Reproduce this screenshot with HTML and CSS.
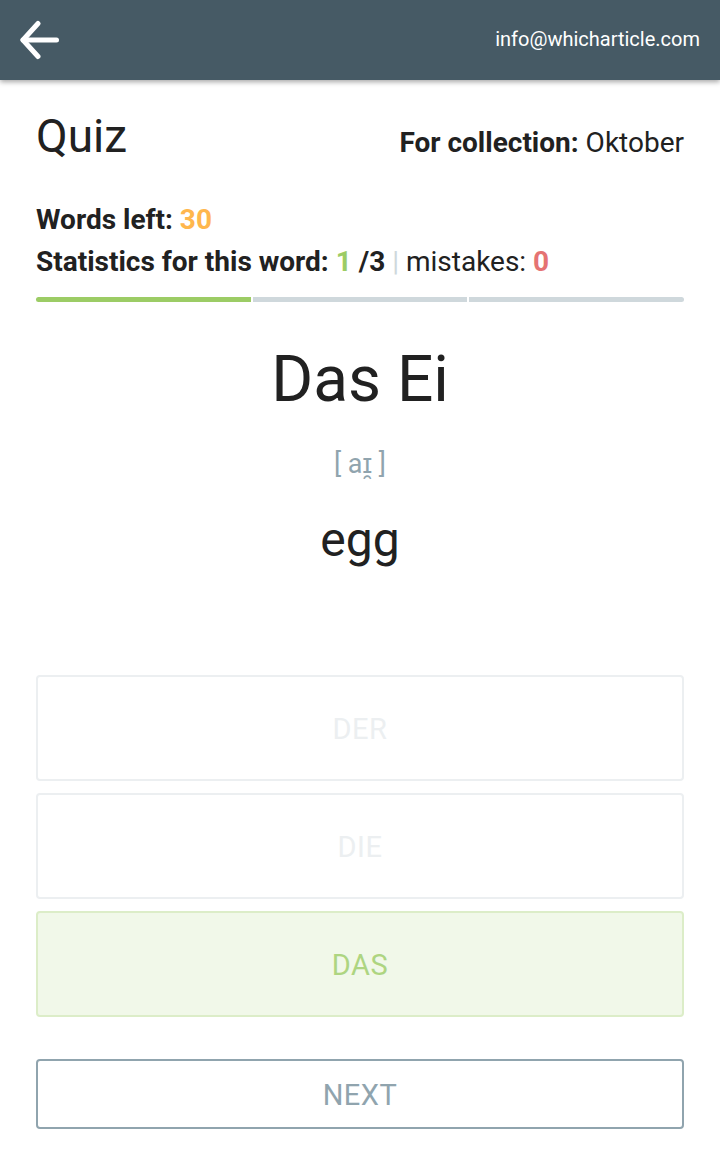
FILE: index.html
```html
<!DOCTYPE html>
<html lang="en">
<head>
<meta charset="utf-8">
<title>Quiz</title>
<link rel="stylesheet" href="styles.css">
</head>
<body>
<header class="topbar">
  <a class="back" href="#" aria-label="Back">
    <svg width="40" height="40" viewBox="0 0 40 40" fill="none" stroke="#ffffff" stroke-width="5" stroke-linecap="round" stroke-linejoin="round">
      <path d="M4 20 H37.5"/>
      <path d="M19 3.5 L4 20 L19 36.5"/>
    </svg>
  </a>
  <span class="email">info@whicharticle.com</span>
</header>
<main class="content">
  <div class="title-row">
    <h1 class="title">Quiz</h1>
    <div class="collection"><b>For collection:</b> Oktober</div>
  </div>
  <div class="stats">
    <div class="stat-line"><b>Words left:</b> <b class="orange">30</b></div>
    <div class="stat-line"><b>Statistics for this word:</b> <b class="green">1</b> <b>/3</b> <span class="sep">|</span> mistakes: <b class="red">0</b></div>
  </div>
  <div class="progress">
    <div class="seg done"></div>
    <div class="seg"></div>
    <div class="seg"></div>
  </div>
  <div class="word">
    <div class="noun">Das Ei</div>
    <div class="phon">[ aɪ̯ ]</div>
    <div class="trans">egg</div>
  </div>
  <div class="answers">
    <div class="answer">DER</div>
    <div class="answer">DIE</div>
    <div class="answer correct">DAS</div>
  </div>
  <div class="next">NEXT</div>
</main>
</body>
</html>
```
FILE: styles.css
```css
* { box-sizing: border-box; }
html, body { margin: 0; padding: 0; background: #ffffff; }
body {
  font-family: Roboto, "Liberation Sans", Arial, sans-serif;
  color: #212121;
}
.topbar {
  height: 80px;
  background: #465a65;
  display: flex;
  align-items: center;
  justify-content: space-between;
  padding: 0 20px 0 19px;
  box-shadow: 0 2px 5px rgba(0, 0, 0, 0.35);
}
.back { display: flex; width: 40px; height: 40px; }
.back svg { display: block; }
.email {
  color: #ffffff;
  font-size: 20px;
  line-height: 1;
  padding-bottom: 2px;
}
.content { padding: 0 36px; }
.title-row {
  display: flex;
  justify-content: space-between;
  align-items: baseline;
  margin-top: 33px;
}
.title {
  margin: 0;
  font-size: 46px;
  font-weight: 400;
  line-height: 1;
}
.collection { font-size: 28px; line-height: 1; }
.collection b { font-weight: 700; }
.stats { margin-top: 40px; font-size: 28px; line-height: 42px; }
.orange { color: #ffb74d; }
.green { color: #9ccc65; }
.red { color: #e57373; }
.sep { color: #cfd8dc; }
.progress {
  margin-top: 14px;
  display: flex;
  gap: 2px;
  height: 5px;
}
.seg { flex: 1; background: #cfd8dc; }
.seg:first-child { border-radius: 3px 0 0 3px; }
.seg:last-child { border-radius: 0 3px 3px 0; }
.seg.done { background: #9ccc65; }
.word { text-align: center; }
.noun { margin-top: 46px; font-size: 64px; line-height: 1; }
.phon { margin-top: 39px; font-size: 27px; line-height: 1; color: #90a4ae; }
.trans { margin-top: 38px; font-size: 48px; line-height: 1; }
.answers {
  margin-top: 111px;
  display: flex;
  flex-direction: column;
  gap: 12px;
}
.answer {
  height: 106px;
  border: 2px solid #eceff1;
  border-radius: 4px;
  display: flex;
  align-items: center;
  justify-content: center;
  padding-top: 3px;
  font-size: 29px;
  letter-spacing: 0.5px;
  line-height: 1;
  color: #eceff1;
}
.answer.correct {
  background: #f1f8e9;
  border-color: #dcedc8;
  color: #aed581;
}
.next {
  margin-top: 42px;
  height: 70px;
  border: 2px solid #90a4ae;
  border-radius: 4px;
  display: flex;
  align-items: center;
  justify-content: center;
  padding-top: 3px;
  font-size: 29px;
  letter-spacing: 0.5px;
  line-height: 1;
  color: #90a4ae;
}
```
